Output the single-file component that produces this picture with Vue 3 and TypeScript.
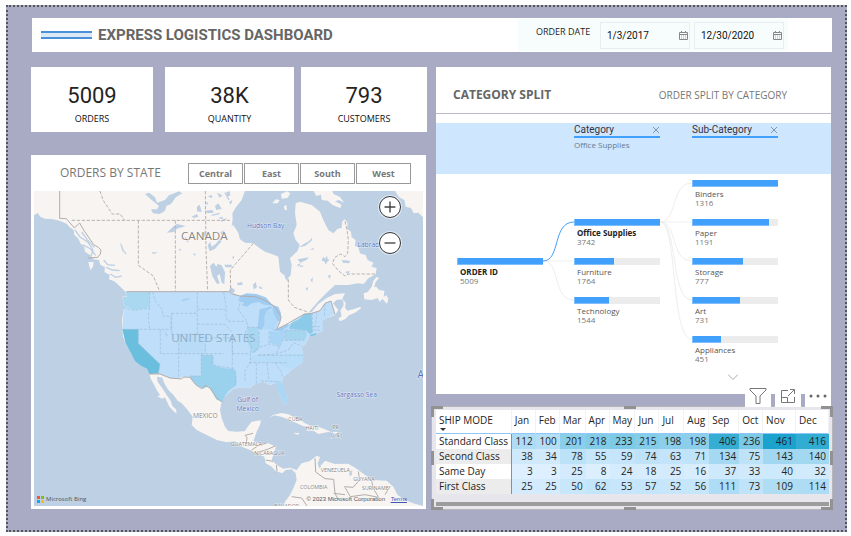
<script setup lang="ts">
import { ref } from 'vue'

interface Kpi { value: string; label: string }
interface TreeNode { name: string; value: number; share: number; x: number; y: number; active?: boolean }
interface MapLabel { text: string; x: number; y: number; kind: string }

const kpis: Kpi[] = [
  { value: '5009', label: 'ORDERS' },
  { value: '38K', label: 'QUANTITY' },
  { value: '793', label: 'CUSTOMERS' },
]

const regions = ['Central', 'East', 'South', 'West']
const startDate = ref('1/3/2017')
const endDate = ref('12/30/2020')

const nodes: TreeNode[] = [
  { name: 'ORDER ID', value: 5009, share: 100, x: 21, y: 84, active: true },
  { name: 'Office Supplies', value: 3742, share: 100, x: 138, y: 45, active: true },
  { name: 'Furniture', value: 1764, share: 47, x: 138, y: 84 },
  { name: 'Technology', value: 1544, share: 41, x: 138, y: 123 },
  { name: 'Binders', value: 1316, share: 100, x: 256, y: 6 },
  { name: 'Paper', value: 1191, share: 90, x: 256, y: 45 },
  { name: 'Storage', value: 777, share: 59, x: 256, y: 84 },
  { name: 'Art', value: 731, share: 56, x: 256, y: 123 },
  { name: 'Appliances', value: 451, share: 34, x: 256, y: 162 },
]

const link = (x1: number, y1: number, x2: number, y2: number) =>
  `M${x1} ${y1}C${x1 + 18} ${y1} ${x2 - 22} ${y2} ${x2} ${y2}`
const links = [
  link(107, 87, 138, 87),
  link(107, 87, 138, 126),
  ...[9, 48, 87, 126, 165].map((y) => link(224, 48, 256, y)),
]
const activeLink = link(107, 87, 138, 48)

const months = ['Jan', 'Feb', 'Mar', 'Apr', 'May', 'Jun', 'Jul', 'Aug', 'Sep', 'Oct', 'Nov', 'Dec']
const columnShares = [76, 24, 24, 26, 24, 26, 24, 25, 25, 30, 24, 33, 33]
const shipModes = [
  { name: 'Standard Class', values: [112, 100, 201, 218, 233, 215, 198, 198, 406, 236, 461, 416] },
  { name: 'Second Class', values: [38, 34, 78, 55, 59, 74, 63, 71, 134, 75, 143, 140] },
  { name: 'Same Day', values: [3, 3, 25, 8, 24, 18, 25, 16, 37, 33, 40, 32] },
  { name: 'First Class', values: [25, 25, 50, 62, 53, 57, 52, 56, 111, 73, 109, 114] },
]

const stops: [number, number[]][] = [
  [0, [223, 240, 255]],
  [60, [196, 229, 250]],
  [112, [174, 220, 244]],
  [220, [130, 204, 231]],
  [406, [54, 174, 212]],
  [461, [27, 163, 206]],
]
function heat(v: number): string {
  const i = Math.max(1, stops.findIndex((s) => s[0] >= v))
  const [a, from] = stops[i - 1]
  const [b, to] = stops[i]
  const t = (v - a) / (b - a)
  return `rgb(${from.map((c, k) => Math.round(c + (to[k] - c) * t)).join(',')})`
}

const landPaths = [
  'M27 123V195L38 189 46 200 60 206 85 208 105 213 125 221 134 232 146 240 148 255 160 266 166 280 178 292 180 305 196 316 206 328 222 330 226 344 240 352 238 366 254 374 252 388 268 394 286 410 300 424 304 438 292 440 298 460 296 480 291 510 292 538 294 560 302 580 318 610 330 634 350 645 366 656 373 672 378 688 388 706 396 722 406 736 396 738 412 746 420 742 432 768 442 780 455 791 453 778 442 768 437 752 425 735 412 715 398 695 396 680 412 683 418 700 430 720 446 736 458 752 470 760 488 780 503 800 500 825 515 840 545 855 575 870 605 877 630 873 650 890 675 900 695 910 718 920 722 940 740 950 752 963 772 970 782 960 800 958 812 970 815 990 805 1015 795 1035 780 1055 775 1068H1194L1165 1060 1140 1050 1118 1035 1105 1010 1085 992 1045 990 1020 975 1000 960 985 950 970 941 930 942 900 932 890 944 878 942 885 921 875 917 855 933 830 940 815 960 795 953 775 956 760 948 748 938 740 930 748 905 753 890 730 880 700 880 685 873 690 860 695 845 705 825 708 811 680 815 668 830 660 843 635 845 610 843 600 830 590 805 585 780 590 755 598 740 625 717 650 712 675 715 685 705 700 698 715 695 735 705 750 698 758 710 760 725 770 745 780 765 786 760 785 740 775 715 770 695 775 680 800 660 820 646 833 635 835 615 830 595 845 575 853 558 875 552 895 540 887 525 892 512 905 505 930 495 940 480 924 460 934 450 954 448 956 466 946 482 950 498 940 506 945 514 960 508 972 496 990 488 1008 475 1006 470 990 476 968 482 960 474 962 458 952 446 960 430 930 432 905 444 880 462 860 486 850 488 880 454 905 428 930 405 970 405 1000 400 1016 402 1030 385 1052 373 1055 354 1040 350 1045 338 1028 330 1022 315 1005 310 1000 292 990 288 992 270 980 262 978 245 966 236 968 220 960 208 952 214 950 234 938 236 925 250 910 240 895 210 885 185 860 165 825 155 812 160 810 190 815 225 805 250 812 270 824 284 818 302 795 325 800 345 797 375 787 388 778 376 765 365 760 320 740 312 720 305 700 292 685 280 660 278 645 268 640 248 625 225 622 190 634 170 650 150 660 123Z',
  'M1055 380L1045 392 1040 410 1028 426 1016 430 1018 448 1040 450 1058 444 1064 456 1072 446 1086 462 1090 446 1084 436 1076 440 1078 422 1062 420 1054 410 1048 412 1052 396 1062 384Z',
  'M1110 123L1122 142 1138 150 1142 170 1158 174 1166 190 1180 188 1194 202V123Z',
  'M866 123L874 138 888 134 890 150 908 152 924 166 946 174 950 164 930 154 942 150 958 158 944 140 926 132 922 123Z',
  'M742 160L752 148 764 150 758 160ZM768 132L786 124 796 130 788 144 770 146ZM776 170L784 164 786 180 780 180Z',
  'M733 804L745 794 770 789 790 793 815 805 838 818 856 827 880 830 900 838 917 845 898 848 880 852 866 842 846 842 848 832 834 828 812 818 790 808 768 800 748 796Z',
  'M808 848L824 850 820 854 810 852ZM924 845L938 846 936 851 924 851Z',
  'M190 336L206 336 204 350 196 360Z',
]

const waterPaths = [
  'M360 132L372 128 390 142 396 158 420 150 432 136 448 130 462 124 472 130 452 142 438 162 424 168 420 182 404 192 384 190 378 178 396 178 402 168 380 150Z',
  'M442 232L456 222 482 228 456 236 446 246 426 248Z',
  'M555 348L566 338 574 350 578 342 590 346 600 366 598 402 590 398 584 372 576 378 584 400 576 402 562 378Z',
  'M598 344H620V352H602Z M626 196L630 216 620 230 624 200Z',
  'M284 276L292 288 296 300 304 310 304 314 292 302Z',
  'M500 200L516 192 520 200 506 204Z M516 170L524 164 530 186 516 184Z',
  'M548 140L560 134 562 144ZM576 128L592 136 584 144ZM604 126L614 124 616 136 606 140ZM570 168L580 160 590 176 574 180ZM612 156L622 150 618 164ZM542 156L550 158 546 166Z',
  'M540 182L562 180 566 188 548 190ZM578 204L592 200 594 208ZM548 286L556 276 560 290 572 282 584 268 590 274 570 296 554 304ZM586 246L600 240 590 254ZM530 250L540 244 544 256 532 262Z',
  'M380 306L400 308 384 312ZM460 298L468 296 466 304ZM504 312L512 310 510 318Z',
  'M822 292L836 282 852 274 862 262 860 272 840 288ZM818 328L852 322 844 330 826 338ZM816 344L828 340 820 350ZM856 390L864 382 862 398ZM842 414L850 412 846 424ZM824 346L838 348 826 352ZM856 300L868 292 864 300Z',
  'M894 320L900 326 906 318 908 328 914 330 906 336 902 344 898 334 890 332ZM950 330L976 332 972 340 954 338ZM908 376L918 376 914 388ZM960 366L974 362 970 372Z',
  'M684 404L692 396 696 412 686 418ZM636 400L650 396 654 404 638 406ZM700 408L714 414 706 418ZM616 410L630 420 626 430 612 424ZM622 318L628 320 624 330Z',
  'M972 966L982 960 980 976 974 978ZM878 938L886 934 888 952 882 954Z',
]

const lakePaths = [
  'M645 438L664 430 694 432 722 442 738 460 752 474 738 466 716 464 702 456 680 460 666 470 650 466 658 458 640 454Z',
  'M704 478L720 474 738 468 742 474 724 484 718 500 718 522 710 540 698 536 700 510Z',
  'M744 466L760 470 768 490 766 512 758 514 750 498 742 480Z',
  'M740 536L756 538 790 520 792 528 770 542 752 544Z',
  'M470 450L490 444 494 448 472 454ZM418 542L428 556 424 560Z',
]

const states = [
  { id: 'CA', fill: '#6bbfde', d: 'M292 538H340V580L405 642 400 670 373 672 366 656 350 648 330 634 318 610 302 580Z' },
  { id: 'TX', fill: '#9ad1ed', d: 'M529 616H564V645L596 655 628 657 634 680 634 706 610 722 597 742 592 756 574 748 562 726 550 708 534 716 514 704 495 684 494 678H529Z' },
  { id: 'WA', fill: '#abd8f1', d: 'M300 426H374V472L350 476 326 480 312 472 298 468 294 440 306 440Z' },
  { id: 'NY', fill: '#8bcae8', d: 'M792 536L798 520 822 508 838 492 860 490 862 548 854 552 842 540Z' },
  { id: 'NYI', fill: '#6fc6dd', d: 'M854 554L876 549 870 556 856 558Z' },
  { id: 'PA', fill: '#a5d5ef', d: 'M780 540L842 540 846 558 838 571H780Z' },
  { id: 'IL', fill: '#a8d7f2', d: 'M668 532H698L702 545 702 590 692 606 682 608 664 570Z' },
  { id: 'OH', fill: '#a8d4f5', d: 'M734 542L758 546 778 538V562L762 588 734 578Z' },
  { id: 'FL', fill: '#abd7f6', d: 'M716 694L752 697 760 725 780 765 786 760 785 740 772 700 750 694Z' },
  { id: 'MI', fill: '#b2d9f8', d: 'M718 484L742 482 760 506 748 538H712L706 506Z' },
  { id: 'CO', fill: '#b8dcf8', d: 'M461 553H541V610H461Z' },
  { id: 'SE', fill: '#b8ddf8', d: 'M676 617L836 612 832 640 800 660 764 646 750 637 676 638Z' },
]

const usPath = 'M304 425H613L645 438 690 440 718 450 750 470 768 500 765 515 755 538 790 524 810 508 838 492 860 490 885 482 900 460 918 453 930 493 905 505 892 512 895 540 875 552 853 558 845 575 830 595 835 615 833 635 800 660 775 680 770 695 775 715 785 740 786 760 780 765 770 745 760 725 758 710 750 698 735 705 715 695 685 705 675 715 650 712 625 717 598 740 592 756 574 748 562 726 550 708 534 716 514 704 495 680 472 681 460 687 435 684 405 672 373 672 366 656 350 648 330 634 318 610 302 580 292 538 296 480 294 440 306 440Z'

const stateLines = 'M374 426V470M294 472L326 481 374 474M374 474L370 500 374 538M292 538H440M340 538V582L405 644 400 672M383 426L392 455 412 480 414 498 438 500V538M440 490H517M440 490V553M517 426V553M517 478H600M406 538V611H596M461 553V685M440 553H541V611M517 523H600L620 545M596 426L602 460 604 478 602 500 608 514H664M541 564H622V611M529 611V678H494M529 616H564V645L630 657M622 558V654M632 663V702M604 426M645 460L640 480 664 510 668 532 660 550 680 590 676 610M622 611H676V638L660 662V696M668 532H702M702 545V590L684 608M732 545V582M684 608L706 592 732 582 764 590 780 560V540M700 616H836M672 638H790M694 640V704M726 640L732 690M708 693H732L768 696M750 638L770 668 772 682M780 571H838M780 540H842M764 590L752 612M790 600L806 578 832 590M700 616L752 612 790 600M862 488V548M876 486L870 530M862 530H888M862 540H884M900 462L898 500'
const provinceLines = 'M225 123L235 152 262 192H286L298 210M140 211H618M340 211V346L385 378 404 424M451 211V424M541 123L543 300 548 424M685 280L616 360 617 424M790 388V450L808 472 848 486M960 214L966 240 970 270 968 310 960 320 946 312 930 322 922 340 940 362 960 378 970 372H1055'
const borderLines = 'M104 123V205L124 206 148 234 164 219 176 240 206 284 220 292 228 300 226 312 218 322 188 324M304 425H613L622 432 645 438 690 440 718 450 750 470 768 500 765 515 755 538 790 520 810 508 838 492 860 490 885 482 900 460 918 453 930 493M373 672L405 672 435 684 470 687 476 681 495 682 512 704 530 716 540 706 555 714 575 744 592 756M664 880L666 862 660 856 684 850M680 900L704 884 724 880M700 906L728 898 750 888M722 930L744 934M754 945L756 964M870 925L872 966 900 986 926 988 930 1030 940 1050M958 1010L984 1012 1004 990 1000 964M1040 992L1044 1014 1060 1040M1096 1008L1080 1034M800 1040L830 1044 846 1068M960 1012L976 1040 1020 1034 1060 1042M926 1030L960 1034'

const mapLabels: MapLabel[] = [
  { text: 'CANADA', x: 538, y: 271, kind: 'country' },
  { text: 'UNITED STATES', x: 565, y: 577, kind: 'country nation' },
  { text: 'MEXICO', x: 541, y: 805, kind: 'small' },
  { text: 'GUATEMALA', x: 664, y: 887, kind: 'tiny' },
  { text: 'NICARAGUA', x: 733, y: 915, kind: 'tiny' },
  { text: 'CUBA', x: 811, y: 812, kind: 'tiny' },
  { text: 'HAITI', x: 861, y: 839, kind: 'tiny' },
  { text: 'PR', x: 932, y: 838, kind: 'tiny' },
  { text: '(U.S.)', x: 932, y: 861, kind: 'tiny' },
  { text: 'VENEZUELA', x: 931, y: 966, kind: 'tiny' },
  { text: 'COLOMBIA', x: 866, y: 1016, kind: 'tiny' },
  { text: 'GUYANA', x: 1017, y: 993, kind: 'tiny' },
  { text: 'SURINAME', x: 1051, y: 1019, kind: 'tiny' },
  { text: 'ECUADOR', x: 785, y: 1074, kind: 'tiny' },
  { text: 'Hudson Bay', x: 722, y: 233, kind: 'sea' },
  { text: 'Labrador', x: 1040, y: 290, kind: 'sea' },
  { text: 'Gulf of', x: 668, y: 756, kind: 'sea' },
  { text: 'Mexico', x: 668, y: 783, kind: 'sea' },
  { text: 'Sargasso Sea', x: 995, y: 740, kind: 'sea' },
  { text: 'A', x: 1187, y: 684, kind: 'ocean' },
]
</script>

<template>
  <main class="page">
    <div class="canvas">
      <header class="topbar">
        <span class="stripes"></span>
        <h1>EXPRESS LOGISTICS DASHBOARD</h1>
        <div class="dates">
          <label for="date-from">ORDER DATE</label>
          <div class="date-fields">
            <span class="date">
              <input id="date-from" v-model="startDate" type="text" />
              <svg viewBox="0 0 9 9"><path d="M.5 1.5h8v7h-8zM.5 3.5h8M2.5 0v2M6.5 0v2" /><path class="days" d="M2 5h1M4 5h1M6 5h1M2 7h1M4 7h1M6 7h1" /></svg>
            </span>
            <span class="date">
              <input v-model="endDate" type="text" aria-label="End date" />
              <svg viewBox="0 0 9 9"><path d="M.5 1.5h8v7h-8zM.5 3.5h8M2.5 0v2M6.5 0v2" /><path class="days" d="M2 5h1M4 5h1M6 5h1M2 7h1M4 7h1M6 7h1" /></svg>
            </span>
          </div>
        </div>
      </header>

      <div class="columns">
        <div class="left">
          <section class="kpis">
            <article v-for="k in kpis" :key="k.label" class="kpi">
              <strong>{{ k.value }}</strong>
              <span>{{ k.label }}</span>
            </article>
          </section>

          <section class="map-card">
            <div class="map-head">
              <h2>ORDERS BY STATE</h2>
              <div class="regions">
                <button v-for="r in regions" :key="r" type="button">{{ r }}</button>
              </div>
            </div>
            <div class="map">
              <svg class="map-svg" viewBox="27 123 1167 945">
                <path v-for="(d, i) in landPaths" :key="'l' + i" class="land" :d="d" />
                <path v-for="(d, i) in waterPaths" :key="'w' + i" class="water" :d="d" />
                <g class="inlets">
                  <path d="M150 240L166 262 188 276 204 300 198 318M170 246L186 268 208 292M172 284L196 296 212 316M236 330L248 344 270 346M244 352L262 360 284 362M256 372L272 382 290 378M600 128L612 150M560 196L584 190M480 262L490 276M588 214L604 206M780 380L788 392" />
                </g>
                <path class="us" :d="usPath" />
                <path v-for="s in states" :key="s.id" :d="s.d" :fill="s.fill" />
                <path v-for="(d, i) in lakePaths" :key="'k' + i" class="lake" :d="d" />
                <path class="ontario" d="M755 538L766 512 772 500 786 496 810 490 836 490 810 506 798 520 776 526Z" />
                <path class="state-lines" :d="stateLines" />
                <path class="province-lines" :d="provinceLines" />
                <path class="border-lines" :d="borderLines" />
                <text v-for="l in mapLabels" :key="l.text" :x="l.x" :y="l.y" :class="l.kind">{{ l.text }}</text>
              </svg>
              <div class="zoom">
                <button type="button" aria-label="Zoom in"><svg viewBox="0 0 22 22"><path d="M5 11h12M11 5v12" /></svg></button>
                <button type="button" aria-label="Zoom out"><svg viewBox="0 0 22 22"><path d="M5 11h12" /></svg></button>
              </div>
              <div class="attribution">
                <span class="bing">
                  <svg viewBox="0 0 7 7"><path fill="#f1582c" d="M0 0h3v3H0z" /><path fill="#80bb2a" d="M4 0h3v3H4z" /><path fill="#16a5ee" d="M0 4h3v3H0z" /><path fill="#fbba1a" d="M4 4h3v3H4z" /></svg>
                  Microsoft Bing
                </span>
                <span class="copy">© 2023 Microsoft Corporation <a href="#terms">Terms</a></span>
              </div>
            </div>
          </section>
        </div>

        <div class="right">
          <section class="split">
            <div class="split-head">
              <h2>CATEGORY SPLIT</h2>
              <p>ORDER SPLIT BY CATEGORY</p>
            </div>
            <div class="levels">
              <div class="level">
                <div class="level-name">Category<button type="button" aria-label="Remove Category"><svg viewBox="0 0 6 6"><path d="M0 0l6 6M6 0L0 6" /></svg></button></div>
                <span>Office Supplies</span>
              </div>
              <div class="level">
                <div class="level-name">Sub-Category<button type="button" aria-label="Remove Sub-Category"><svg viewBox="0 0 6 6"><path d="M0 0l6 6M6 0L0 6" /></svg></button></div>
              </div>
            </div>
            <div class="tree">
              <svg class="links" width="395" height="220" viewBox="0 0 395 220">
                <path v-for="d in links" :key="d" :d="d" />
                <path class="on" :d="activeLink" />
              </svg>
              <div
                v-for="n in nodes"
                :key="n.name"
                class="node"
                :class="{ active: n.active }"
                :style="{ left: n.x + 'px', top: n.y + 'px' }"
              >
                <div class="track"><div class="fill" :style="{ width: n.share + '%' }"></div></div>
                <b>{{ n.name }}</b>
                <span>{{ n.value }}</span>
              </div>
              <button class="more" type="button" aria-label="Show more"><svg viewBox="0 0 10 6"><path d="M0 .5l5 5 5-5" /></svg></button>
            </div>
          </section>

          <section class="matrix">
            <div class="tools">
              <button type="button" aria-label="Filters"><svg viewBox="0 0 18 18"><path d="M1 1.500h16v1.500l-6 6v7.500H7V9L1 3z" /></svg></button>
              <button type="button" aria-label="Focus mode"><svg viewBox="0 0 18 18"><path d="M9 3.500H2.500v12h13V10M2.500 10.500h6v5M9 9l6-6M11 2.500h4.500V7" /></svg></button>
              <button type="button" aria-label="More options"><svg viewBox="0 0 18 18"><g fill="#666" stroke="none"><circle cx="2" cy="9" r="1.500" /><circle cx="9" cy="9" r="1.500" /><circle cx="16" cy="9" r="1.500" /></g></svg></button>
            </div>
            <i class="handle tl"></i><i class="handle tc"></i><i class="handle tr"></i>
            <i class="handle ml"></i><i class="handle mr"></i>
            <i class="handle bl"></i><i class="handle bc"></i><i class="handle br"></i>
            <table>
              <colgroup>
                <col v-for="(c, i) in columnShares" :key="i" :style="{ width: c / 3.94 + '%' }" />
              </colgroup>
              <thead>
                <tr>
                  <th class="mode">SHIP MODE</th>
                  <th v-for="m in months" :key="m">{{ m }}</th>
                </tr>
              </thead>
              <tbody>
                <tr v-for="row in shipModes" :key="row.name">
                  <th scope="row">{{ row.name }}</th>
                  <td v-for="(v, i) in row.values" :key="i" :style="{ background: heat(v) }">{{ v }}</td>
                </tr>
              </tbody>
            </table>
            <div class="scrollbar"></div>
          </section>
        </div>
      </div>
    </div>
  </main>
</template>

<style>
body {
  background: #fdfdfd;
}
</style>

<style scoped>
* {
  box-sizing: border-box;
}
.page {
  padding: 5px 4px 4px 6px;
  font-family: "Open Sans", "Noto Sans", sans-serif;
  color: #252423;
}
h1, h2, p {
  margin: 0;
}
button {
  padding: 0;
  border: 0;
  background: none;
  font-family: inherit;
  color: inherit;
}
svg {
  display: block;
  fill: none;
}
.canvas {
  border: 2px dotted #555;
  background: #a9abc5;
  padding: 11px 14px 20px 23px;
}
.topbar {
  display: flex;
  align-items: center;
  height: 34px;
  margin-left: 1px;
  margin-right: -1px;
  padding-left: 9px;
  padding-right: 44px;
  background: #fff;
}
.stripes {
  width: 51px;
  height: 8px;
  border-top: 2px solid #4a90d9;
  border-bottom: 2px solid #4a90d9;
  background: #dbe9f7;
}
h1 {
  margin-left: 6px;
  font: bold 15px/20px Roboto, sans-serif;
  color: #666;
  white-space: nowrap;
}
.dates {
  display: flex;
  height: 32px;
  margin-left: auto;
  background: #f7fdfd;
}
.dates label {
  width: 82px;
  padding-left: 18px;
  font-size: 9px;
  line-height: 26px;
  white-space: nowrap;
}
.date-fields {
  display: flex;
  gap: 4px;
  padding: 3px 4px 2px 0;
}
.date {
  display: flex;
  align-items: center;
  width: 90px;
  padding-right: 1px;
  border: 1px solid #e8eeee;
}
.date input {
  width: 100%;
  min-width: 0;
  border: 0;
  padding: 0 0 0 6px;
  background: none;
  font: 10px/16px Roboto, sans-serif;
  color: #111;
}
.date svg {
  flex: none;
  width: 9px;
  height: 9px;
  stroke: #888;
}
.date .days {
  stroke: #aaa;
}
.columns {
  display: grid;
  grid-template-columns: 396fr 395fr;
  gap: 9px;
  margin-top: 15px;
}
.left {
  min-width: 0;
}
.right {
  display: flex;
  flex-direction: column;
  min-width: 0;
}
.kpis {
  display: grid;
  grid-template-columns: 127fr 129fr 126fr;
  gap: 7px;
}
.kpi {
  display: flex;
  flex-direction: column;
  align-items: center;
  height: 65px;
  padding-top: 16px;
  background: #fff;
}
.kpi:first-child {
  margin-right: 5px;
}
.kpi strong {
  font: 22px/26px Roboto, sans-serif;
}
.kpi span {
  margin-top: 4px;
  font-size: 9px;
  line-height: 12px;
  color: #111;
}
.map-card {
  margin-top: 23px;
  margin-right: 1px;
  padding: 0 3px 3px;
  background: #fff;
}
.map-head {
  display: flex;
  align-items: center;
  height: 36px;
  padding: 0 12px 0 26px;
}
.map-head h2 {
  font-weight: 400;
  font-size: 12px;
  line-height: 16px;
  color: #777;
  white-space: nowrap;
}
.regions {
  display: flex;
  gap: 1px;
  margin-left: auto;
}
.regions button {
  width: 55px;
  height: 21px;
  border: 1px solid #999;
  font-size: 9px;
  font-weight: 700;
  color: #777;
}
.map {
  position: relative;
  overflow: hidden;
  background: #bdd0e4;
}
.map-svg {
  width: 100%;
  height: auto;
}
.land, .ontario {
  fill: #f7f4f2;
}
.water {
  fill: #bdd0e4;
}
.inlets {
  stroke: #bdd0e4;
  stroke-width: 4;
}
.us {
  fill: #bfdefa;
}
.lake {
  fill: #a0ccf2;
}
.state-lines {
  stroke: #9dbdd6;
  stroke-width: 2;
  stroke-dasharray: 9 4;
}
.province-lines {
  stroke: #b9b3b0;
  stroke-width: 3;
  stroke-dasharray: 10 5;
}
.border-lines {
  stroke: #b3adab;
  stroke-width: 3;
}
.map-svg text {
  text-anchor: middle;
  fill: #8a8583;
  stroke: #fff;
  stroke-opacity: 0.6;
  stroke-width: 3;
  paint-order: stroke;
}
.map-svg .country {
  font-size: 35px;
}
.map-svg .nation {
  fill: #8faec6;
  stroke: none;
}
.map-svg .small {
  font-size: 20px;
}
.map-svg .tiny {
  font-size: 16px;
}
.map-svg .sea {
  font-size: 20px;
  fill: #5571c0;
}
.map-svg .ocean {
  font-size: 30px;
  fill: #5571c0;
}
.zoom {
  position: absolute;
  top: 5px;
  right: 22px;
  display: grid;
  gap: 14px;
}
.zoom button {
  width: 22px;
  height: 22px;
  border: 1px solid #333;
  border-radius: 50%;
  background: #fff;
  box-shadow: 0 0 0 1px #fff8;
}
.zoom svg {
  width: 20px;
  height: 20px;
  stroke: #444;
  stroke-width: 1.5;
}
.attribution {
  position: absolute;
  right: 16px;
  bottom: 2px;
  left: 3px;
  display: flex;
  align-items: flex-end;
  justify-content: space-between;
  font-size: 6px;
  line-height: 10px;
  color: #555;
}
.bing {
  display: flex;
  align-items: center;
  gap: 2px;
}
.bing svg {
  width: 7px;
  height: 7px;
}
.copy {
  font-family: "Liberation Sans", sans-serif;
}
.copy a {
  margin-left: 4px;
  color: #4157b8;
}
.split {
  height: 327px;
  background: #fff;
}
.split-head {
  display: flex;
  align-items: center;
  justify-content: space-between;
  height: 47px;
  padding: 10px 44px 0 17px;
  border-bottom: 1px solid #b9bacb;
}
.split-head h2 {
  font-size: 12px;
  line-height: 18px;
  color: #666;
}
.split-head p {
  font-size: 10px;
  line-height: 18px;
  color: #777;
}
.levels {
  display: flex;
  gap: 32px;
  height: 51px;
  margin-top: 9px;
  padding-top: 1px;
  padding-left: 138px;
  background: #cfe6ff;
}
.level {
  width: 86px;
}
.level-name {
  display: flex;
  justify-content: space-between;
  height: 14px;
  padding-right: 1px;
  border-bottom: 2px solid #41a0fb;
  font: 10px/12px Roboto, sans-serif;
  color: #334;
}
.level-name button {
  width: 6px;
  height: 12px;
}
.level-name svg {
  width: 6px;
  height: 6px;
  stroke: #8096ac;
}
.level span {
  display: block;
  font-size: 8px;
  line-height: 13px;
  color: #667b90;
}
.tree {
  position: relative;
  height: 219px;
}
.links {
  stroke: #eee;
}
.links .on {
  stroke: #41a0fb;
}
.node {
  position: absolute;
  width: 86px;
}
.track {
  height: 7px;
  margin-bottom: 2px;
  background: #ececec;
}
.fill {
  height: 7px;
  border: 1px solid #7fbefc;
  border-width: 0 0 1px 1px;
  background: #41a0fb;
}
.node b, .node span {
  display: block;
  padding-left: 3px;
  font-size: 8px;
  line-height: 9px;
  font-weight: 400;
  color: #555;
  white-space: nowrap;
}
.node span {
  color: #777;
}
.node.active b {
  font-weight: 700;
  color: #222;
}
.more {
  position: absolute;
  top: 199px;
  left: 292px;
  width: 10px;
  height: 8px;
}
.more svg {
  width: 10px;
  height: 6px;
  stroke: #aaa;
}
.matrix {
  position: relative;
  margin: 12px -2px 0 -5px;
  padding: 3px 3px 3px 4px;
  border: 1px solid #b6b6bb;
  background: #e6e6ec;
}
.tools {
  position: absolute;
  right: 1px;
  bottom: 100%;
  display: flex;
  gap: 4px;
}
.tools button {
  display: grid;
  place-items: center;
  width: 26px;
  height: 22px;
  background: #fff;
}
.tools svg {
  width: 18px;
  height: 18px;
  stroke: #777;
}
.handle {
  position: absolute;
  width: 12px;
  height: 11px;
  border: 0 solid #929292;
}
.tl { top: -1px; left: -1px; border-width: 3px 0 0 3px; }
.tc { top: -1px; left: 48%; border-width: 3px 0 0; }
.tr { top: -1px; right: -1px; border-width: 3px 3px 0 0; }
.ml { top: 43%; left: -1px; height: 14px; border-width: 0 0 0 3px; }
.mr { top: 43%; right: -1px; height: 14px; border-width: 0 3px 0 0; }
.bl { bottom: -1px; left: -1px; border-width: 0 0 3px 3px; }
.bc { bottom: -1px; left: 48%; border-width: 0 0 3px; }
.br { right: -1px; bottom: -1px; border-width: 0 3px 3px 0; }
table {
  width: 100%;
  border-collapse: separate;
  border-spacing: 0;
  table-layout: fixed;
  font-size: 10px;
  line-height: 15px;
}
th, td {
  padding: 0 3px 0 0;
  font-weight: 400;
  white-space: nowrap;
}
thead th {
  height: 24px;
  padding: 0 0 3px 3px;
  border-bottom: 1px solid #8fc6f8;
  border-right: 1px solid #f2f2f2;
  background: #fff;
  text-align: left;
}
.mode {
  position: relative;
}
.mode::after {
  content: "";
  position: absolute;
  bottom: 2px;
  left: 4px;
  border: 3px solid transparent;
  border-top-color: #333;
  border-bottom: 0;
}
tbody th {
  padding: 0 0 0 3px;
  border-right: 1px solid #41a0fb;
  background: #fff;
  text-align: left;
}
tbody tr:nth-child(even) th {
  background: #ececec;
}
td {
  text-align: right;
}
.scrollbar {
  height: 4px;
  margin-top: 8px;
  background: #9c9c9c;
}
</style>
